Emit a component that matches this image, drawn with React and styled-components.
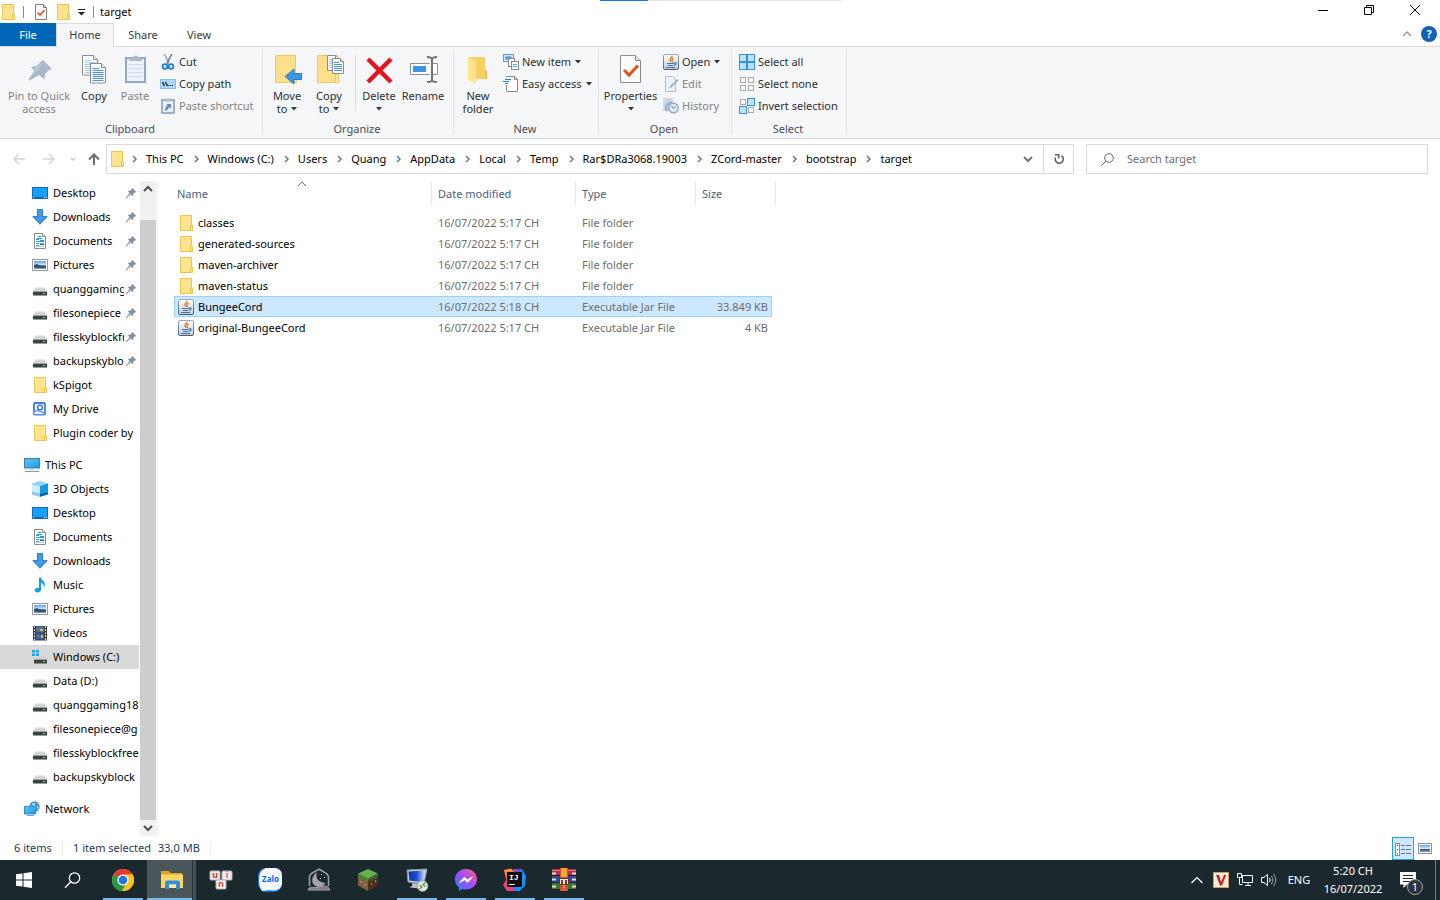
import React from "react";
import styled, { createGlobalStyle, css } from "styled-components";

const GlobalStyle = createGlobalStyle`
  *, *::before, *::after { box-sizing: border-box; }
  body {
    margin: 0;
    background: #fff;
    color: #000;
    font-family: "Noto Sans", "Open Sans", sans-serif;
    font-size: 11px;
    line-height: 14px;
  }
  button, input {
    font: inherit;
    color: inherit;
  }
  button {
    border: 0;
    padding: 0;
    background: transparent;
    text-align: left;
  }
  svg { display: block; flex: none; }
`;

/* ---------- shared gradients ---------- */

const HiddenSvg = styled.svg`
  position: absolute;
`;

const Defs = () => (
  <HiddenSvg width="0" height="0" aria-hidden="true">
    <defs>
      <linearGradient id="javaPlate" x1="0" y1="0" x2="0" y2="1">
        <stop offset="0" stopColor="#fdfdfe" />
        <stop offset="1" stopColor="#c3ccd6" />
      </linearGradient>
      <linearGradient id="javaEdge" x1="0" y1="0" x2="0" y2="1">
        <stop offset="0" stopColor="#9aabbc" />
        <stop offset="1" stopColor="#3f5f80" />
      </linearGradient>
      <linearGradient id="screen" x1="0" y1="0" x2="1" y2="1">
        <stop offset="0" stopColor="#5fc4f5" />
        <stop offset="1" stopColor="#1d9be6" />
      </linearGradient>
      <linearGradient id="photo" x1="0" y1="0" x2="0" y2="1">
        <stop offset="0" stopColor="#4f9ff0" />
        <stop offset="0.5" stopColor="#d8ebfa" />
        <stop offset="0.6" stopColor="#35506d" />
        <stop offset="1" stopColor="#7ba2c6" />
      </linearGradient>
      <linearGradient id="messenger" x1="0" y1="1" x2="1" y2="0">
        <stop offset="0" stopColor="#1a8cff" />
        <stop offset="0.5" stopColor="#a14bfa" />
        <stop offset="1" stopColor="#ff6480" />
      </linearGradient>
      <linearGradient id="ideaLeft" x1="0" y1="0" x2="0" y2="1">
        <stop offset="0" stopColor="#ffa229" />
        <stop offset="0.5" stopColor="#f8405f" />
        <stop offset="1" stopColor="#e8408c" />
      </linearGradient>
      <linearGradient id="blueCrt" x1="0" y1="0" x2="1" y2="0">
        <stop offset="0" stopColor="#0a2ea8" />
        <stop offset="0.5" stopColor="#1c51d8" />
        <stop offset="1" stopColor="#c6dcfb" />
      </linearGradient>
    </defs>
  </HiddenSvg>
);

/* ---------- icons: 16px ---------- */

const Svg16 = ({ children, ...rest }) => (
  <svg width="16" height="16" viewBox="0 0 16 16" aria-hidden="true" {...rest}>
    {children}
  </svg>
);

const FolderIcon = () => (
  <Svg16>
    <path d="M2.500.5h11v10.200h1v4.800h-12z" fill="#ffe48f" stroke="#eec44c" />
    <path d="M12.500 15.500v-4.800h2v4.800z" fill="#ffe9a4" stroke="#eec44c" />
  </Svg16>
);

const JavaIcon = () => (
  <Svg16>
    <rect x=".5" y=".5" width="15" height="15" rx="1.500" fill="url(#javaPlate)" stroke="url(#javaEdge)" />
    <path d="M9 1.800c.6 1.800-2.800 2.700-2 4.200.3.700.9 1 .9 1.800M10.600 4.200c-1.700.6-2 1.500-1.300 2.300.4.500.2 1.100-.3 1.600" fill="none" stroke="#ec7a1c" strokeWidth="1.400" />
    <path d="M4 9.500h7M5 11.500h5M3 13.500h9" stroke="#4474a4" />
    <path d="M11 9c1.600-.8 2.600.2 1.800 1.200-.4.500-1.100.9-1.800 1.100" fill="none" stroke="#4474a4" strokeWidth="1.200" />
  </Svg16>
);

const DesktopIcon = () => (
  <Svg16>
    <rect x=".5" y="2.500" width="15" height="11" fill="#12a0fb" stroke="#0c6fc0" />
    <path d="M1 12.500h14" stroke="#0a66b5" />
    <path d="M1 12.500h1M12 12.500h1M14 12.500h1" stroke="#fff" />
    <path d="M11 5h1v1h-1zM13 8h1v1h-1z" fill="#4fc1ff" />
  </Svg16>
);

const DownloadIcon = () => (
  <Svg16>
    <path d="M5.500.5h5v7h4.600L8 15.300.9 7.500h4.600z" fill="#3d9be8" stroke="#2b7dc4" />
  </Svg16>
);

const DocumentIcon = () => (
  <Svg16>
    <path d="M2.500.5h8l3 3v12h-11z" fill="#fff" stroke="#8a8a8a" />
    <path d="M10.500.5v3h3" fill="#e8e8e8" stroke="#8a8a8a" />
    <path d="M6 3.500h3M5 5.500h5M4 6.500h3M8 7.500h4M4 8.500h8" stroke="#1d9ae8" />
    <path d="M4 10.500h3M4 12.500h3" stroke="#3fa4e2" />
    <path d="M8 10.500h4" stroke="#8ab0cc" />
    <path d="M8 11.500h4" stroke="#3c5877" />
    <path d="M4 13.500h8" stroke="#b9d6ea" />
  </Svg16>
);

const PictureIcon = () => (
  <Svg16>
    <rect x=".5" y="2.500" width="15" height="11" fill="#fff" stroke="#9a9a9a" />
    <rect x="2" y="4" width="12" height="8" fill="url(#photo)" />
    <path d="M2 8l3-1 3 1.500 6 .5v1.500l-7 .5-5-1z" fill="#2f5173" />
  </Svg16>
);

const DriveIcon = () => (
  <Svg16>
    <path d="M3.500 6.500h9L15 10H1z" fill="#d6d6d6" />
    <rect x="1" y="10" width="14" height="4.500" rx=".5" fill="#3b4145" />
    <path d="M1 10.500h14" stroke="#a0a3a5" />
    <path d="M11 12h2v1h-2z" fill="#6fdb5a" />
  </Svg16>
);

const WindowsDriveIcon = () => (
  <Svg16>
    <path d="M0 1h3v2.500H0zM4 1h3v2.500H4zM0 4.500h3V7H0zM4 4.500h3V7H4z" fill="#18a4f0" />
    <path d="M7 7.500h6l2 3H2l1.500-2H7z" fill="#d0d0d0" />
    <path d="M2 10h13v4.500H2z" fill="#3b4145" />
    <path d="M2 10.500h13" stroke="#a0a3a5" />
    <path d="M11 12h2v1h-2z" fill="#6fdb5a" />
  </Svg16>
);

const GoogleDriveIcon = () => (
  <Svg16>
    <rect x="2" y="2" width="11" height="11.500" rx="1" fill="#eaf2fe" stroke="#3f7fe8" strokeWidth="1.800" />
    <circle cx="8" cy="6.500" r="2.400" fill="#fff" stroke="#2468d8" strokeWidth="1.300" />
    <path d="M1.500 13.500c.3-3.500 3.300-4.600 6-3.200 1.600 1 3.700.2 5.500 3.200z" fill="#fff" stroke="#4d90f0" strokeWidth="1.200" />
  </Svg16>
);

const PcIcon = () => (
  <Svg16>
    <rect x=".5" y="1.500" width="15" height="9.500" fill="url(#screen)" stroke="#3f7fa8" />
    <path d="M6 11.500h4v1.500H6z" fill="#b8c4cc" />
    <path d="M1 14.500h14" stroke="#7d9db8" />
  </Svg16>
);

const CubeIcon = () => (
  <Svg16>
    <path d="M8 .5l8 2.300v10.400l-8 2.500-8-2.500V2.800z" fill="#1b9de2" />
    <path d="M8 .5l8 2.300-8 2.400-8-2.400z" fill="#8fd4f4" />
    <path d="M0 2.800l8 2.400v10.500l-8-2.500z" fill="#cfeafb" />
    <path d="M0 10.500l8 2v3.200l-8-2.500z" fill="#8cc8ec" />
    <path d="M8 12l8-1v2.200l-8 2.500z" fill="#0a5ea8" />
    <path d="M8 5.200l8-2.400v8.400l-8 1.800z" fill="#139ae2" />
  </Svg16>
);

const MusicIcon = () => (
  <Svg16>
    <path d="M7 .5h2c.3 2.600 3.900 3.600 3.900 7 0 1.300-.5 2.500-1.100 3 .4-2.700-.8-4-2.800-4.500v6.700c0 1.700-1.700 2.800-3.700 2.800C3.500 15.500 2.600 14.500 2.600 13.300c0-1.700 2-2.800 4.400-2.500z" fill="#119fee" />
  </Svg16>
);

const VideoIcon = () => (
  <Svg16>
    <rect x="1" y="1" width="14" height="14.500" fill="#3d3d3d" />
    <path d="M2.500 1.500v14M13.500 1.500v14" stroke="#fff" strokeDasharray="1.500 1.500" />
    <rect x="4" y="1.500" width="8" height="6" fill="#3e74b8" />
    <rect x="4" y="8.500" width="8" height="6" fill="#3463a8" />
    <path d="M5 3h3v2H5zM5 10h3v2H5z" fill="#c94a36" />
    <path d="M8 4h3v2H8zM9 10h2v3H9z" fill="#e0b845" />
  </Svg16>
);

const NetworkIcon = () => (
  <Svg16>
    <circle cx="10.500" cy="5.500" r="5.200" fill="#4b93cc" />
    <path d="M8 2.500c2-1.500 4 0 3 1.500s-3 .5-3-1.500zM12.500 5c2 0 2.500 1.500 1 3z" fill="#b9d9ec" />
    <rect x=".5" y="5.500" width="11" height="7.500" fill="url(#screen)" stroke="#3c8fc8" />
    <path d="M3 14.500h7" stroke="#5aa9dd" />
  </Svg16>
);

const PinIcon = () => (
  <svg width="12" height="12" viewBox="0 0 12 12" aria-hidden="true">
    <path d="M7.200.8L11.300 4.900 9.800 5.400 8.300 7 8.100 9.500 5.700 7.500 1 11.500.5 11 4.500 6.300 2.600 4 5 3.800 6.600 2.300z" fill="#8593a1" />
  </svg>
);

const CheckedPageIcon = () => (
  <Svg16>
    <path d="M2.500.5h8l3 3v12h-11z" fill="#fafafa" stroke="#7f7f7f" />
    <path d="M10.500.5v3h3" fill="#ddd" stroke="#7f7f7f" />
    <path d="M4.500 8.500L7 11l4.500-5" fill="none" stroke="#e8531f" strokeWidth="1.700" />
  </Svg16>
);

const CutIcon = () => (
  <Svg16>
    <path d="M3.500 0H5l4.800 9-1.500 1z" fill="#a2a8ae" />
    <path d="M12.500 0H11L6.200 9l1.500 1z" fill="#747b82" />
    <circle cx="5" cy="12.500" r="2.300" fill="none" stroke="#1d7fd0" strokeWidth="1.800" />
    <circle cx="11" cy="12.500" r="2.300" fill="none" stroke="#1d7fd0" strokeWidth="1.800" />
  </Svg16>
);

const CopyPathIcon = () => (
  <Svg16>
    <rect x=".5" y="3.500" width="15" height="9" fill="#a9d8fb" stroke="#7fc0ee" />
    <path d="M2.500 6l2 4M5.500 6l2 4" stroke="#111" strokeWidth="1.200" />
    <path d="M8 9h1v1H8zM10 9h1v1h-1zM12 9h1v1h-1z" fill="#111" />
  </Svg16>
);

const PasteShortcutIcon = () => (
  <Svg16>
    <rect x="2" y="2" width="12" height="13" fill="#e9eef8" stroke="#8b9fc4" strokeWidth="1.600" />
    <rect x="5" y=".5" width="6" height="3" fill="#b4bccb" />
    <path d="M5 12.500c0-2.500.8-4 2.500-5L6.300 6H11v4.700L9.500 9.300C8.300 10 7.500 11 7.200 12.500z" fill="#7088b5" />
  </Svg16>
);

const NewItemIcon = () => (
  <Svg16>
    <rect x=".5" y=".5" width="10" height="7" fill="#cfe6fa" stroke="#5c9ed4" />
    <rect x="2.500" y="2.500" width="6" height="3" fill="#4b8fd6" />
    <rect x="5.500" y="4.500" width="6" height="8" fill="#fff" stroke="#8a8a8a" />
    <rect x="8.500" y="7.500" width="7" height="8" fill="#fff" stroke="#8a8a8a" />
    <path d="M10 10.500h4M10 12.500h4" stroke="#5ba7e3" />
  </Svg16>
);

const EasyAccessIcon = () => (
  <Svg16>
    <path d="M3.500 1.500V.5h8l3 3v12h-11V9" fill="#fff" stroke="#8a8a8a" />
    <path d="M11.500.5v3h3" fill="none" stroke="#8a8a8a" />
    <path d="M2 3.500h6M0 5.500h6M2 7.500h3" stroke="#1f80d0" strokeWidth="1.200" />
  </Svg16>
);

const EditIcon = () => (
  <Svg16>
    <path d="M2.500.5h7l3 3v12h-10z" fill="#edf3fb" stroke="#a9bdd9" />
    <path d="M6 12.500l1-2.500 7.500-7 1 1.500-7 7z" fill="#9db2d0" />
  </Svg16>
);

const HistoryIcon = () => (
  <Svg16>
    <path d="M0 0h9l2 3v10H0z" fill="#ccdbea" />
    <path d="M4 13a5.500 5.500 0 0 1 5-8.500" fill="none" stroke="#a0b6cd" strokeWidth="2.500" />
    <circle cx="10.500" cy="10" r="4.800" fill="#dfe8f1" stroke="#93a9c0" strokeWidth="1.400" />
    <path d="M8.500 8l2 2.500 3-2.500" fill="none" stroke="#6d87a3" />
  </Svg16>
);

const Tile = ({ x, y, on }) => (
  <rect
    x={x + 0.5}
    y={y + 0.5}
    width={on ? 7 : 5}
    height={on ? 7 : 5}
    fill={on ? "#bfe0fb" : "#fff"}
    stroke={on ? "#2e93e3" : "#a8a8a8"}
  />
);

const SelectAllIcon = () => (
  <Svg16>
    <Tile x={0} y={0} on /><Tile x={8} y={0} on />
    <Tile x={0} y={8} on /><Tile x={8} y={8} on />
  </Svg16>
);

const SelectNoneIcon = () => (
  <Svg16>
    <Tile x={1} y={1} /><Tile x={9} y={1} />
    <Tile x={1} y={9} /><Tile x={9} y={9} />
  </Svg16>
);

const InvertIcon = () => (
  <Svg16>
    <Tile x={1} y={1} /><Tile x={8} y={0} on />
    <Tile x={0} y={8} on /><Tile x={9} y={9} />
  </Svg16>
);

/* ---------- icons: 32px ribbon ---------- */

const Svg32 = ({ children }) => (
  <svg width="32" height="32" viewBox="0 0 32 32" aria-hidden="true">
    {children}
  </svg>
);

const BigPinIcon = () => (
  <Svg32>
    <path d="M20 5l9 9-3 1-4 4-.5 5.500-5.500-4.500L6.500 25.500 5.500 24.500 11.500 16 8 12l5.500-1 4-4z" fill="#a9b7c8" />
    <path d="M20 7l-9 7 3 3z" fill="#bccadb" />
  </Svg32>
);

const Page = ({ x, y, tone = "#4c8fe0" }) => (
  <g transform={`translate(${x} ${y})`}>
    <path d="M.5.5h11l4 4v15.500H.5z" fill="#fff" stroke="#8c8c8c" />
    <path d="M11.500.5v4h4" fill="#eee" stroke="#8c8c8c" />
    <path d="M2.500 5.500h7M2.500 7.500h11M2.500 9.500h11M2.500 11.500h11M2.500 13.500h11M2.500 15.500h11M2.500 17.500h11" stroke={tone} />
  </g>
);

const SmallPage = ({ x, y, tone = "#4c8fe0" }) => (
  <g transform={`translate(${x} ${y})`}>
    <path d="M.5.5h8l3 3v12H.5z" fill="#fff" stroke="#8c8c8c" />
    <path d="M8.500.5v3h3" fill="#eee" stroke="#8c8c8c" />
    <path d="M2 4.500h5M2 6.500h8M2 8.500h8M2 10.500h8M2 12.500h8" stroke={tone} />
  </g>
);

const BigCopyIcon = () => (
  <Svg32>
    <Page x={4} y={0} tone="#9ccbf5" />
    <Page x={12} y={8} />
  </Svg32>
);

const BigPasteIcon = () => (
  <Svg32>
    <rect x="7" y="3" width="19" height="24" fill="#eef3fc" stroke="#90a6ce" strokeWidth="2" />
    <path d="M9 9.500h15M9 13.500h15M9 17.500h15M9 21.500h15" stroke="#cfdcf2" />
    <path d="M10 6V3h4a2.500 2.500 0 0 1 5 0h4v3z" fill="#b3bac6" />
  </Svg32>
);

const BigFolder = () => (
  <>
    <path d="M4.500.5h20v27h-20z" fill="#ffe08a" stroke="#eec75f" />
    <path d="M22.500 27.500V19.500h3v8z" fill="#ffe8a4" stroke="#eec75f" />
  </>
);

const MoveToIcon = () => (
  <Svg32>
    <BigFolder />
    <path d="M30.500 18.500v6H23v4.500l-9-7.500 9-7.500v4.500z" fill="#3d94df" stroke="#2e7fc5" />
  </Svg32>
);

const CopyToIcon = () => (
  <Svg32>
    <BigFolder />
    <SmallPage x={14} y={0} tone="#9ccbf5" />
    <SmallPage x={19} y={3} />
  </Svg32>
);

const DeleteIcon = () => (
  <Svg32>
    <path d="M5 4l23 23M28 4L5 27" stroke="#e0161e" strokeWidth="4.500" />
  </Svg32>
);

const RenameIcon = () => (
  <Svg32>
    <path d="M22.500 8.500h-19v11h19M26 8.500h4.500v11H26" fill="#fff" stroke="#8f8f8f" />
    <rect x="6" y="11" width="13" height="6" fill="#3797e6" />
    <path d="M25 3v23M20 2c2.500 0 5 0 5 2.500C25 2 27.500 2 30 2M20 27c2.500 0 5 0 5-2.500 0 2.500 2.500 2.500 5 2.500" fill="none" stroke="#737373" strokeWidth="2" />
  </Svg32>
);

const NewFolderIcon = () => (
  <Svg32>
    <path d="M6 2h17v14l2 1v7H13z" fill="#f8cf61" />
    <path d="M6 2l8 4v23l-8-4z" fill="#ffe390" />
    <path d="M23 15l2 1v8h-2z" fill="#e9bb4e" />
  </Svg32>
);

const PropertiesIcon = () => (
  <Svg32>
    <path d="M5.500.5h15l5 5v22h-20z" fill="#fcfcfc" stroke="#8c8c8c" />
    <path d="M20.500.5v5h5" fill="#e4e4e4" stroke="#8c8c8c" />
    <path d="M9 15l5 5 9-9.500" fill="none" stroke="#e8511d" strokeWidth="3" />
  </Svg32>
);

/* ---------- small glyphs ---------- */

const Caret = () => (
  <svg width="6" height="4" viewBox="0 0 6 4" aria-hidden="true">
    <path d="M0 0h6L3 3.500z" fill="#333" />
  </svg>
);

const Chevron = ({ d, size = 10, color = "#666", weight = 1.500 }) => (
  <svg width={size} height={size} viewBox="0 0 10 10" aria-hidden="true">
    <path d={d} fill="none" stroke={color} strokeWidth={weight} />
  </svg>
);
const UP = "M1 7l4-4 4 4";
const DOWN = "M1 3l4 4 4-4";
const RIGHT = "M3 2l3 3-3 3";

/* ---------- window frame ---------- */

const Screen = styled.div`
  display: flex;
  flex-direction: column;
  min-height: 100vh;
`;

const TitleBar = styled.header`
  position: relative;
  display: flex;
  align-items: center;
  height: 23px;
  padding-right: 2px;
`;

const QuickTools = styled.div`
  display: flex;
  align-items: center;
  gap: 6px;
  flex: 1;
`;

const Divider = styled.span`
  width: 1px;
  height: 12px;
  margin-left: 1px;
  margin-right: ${(p) => p.$after || 0}px;
  background: #8c8c8c;
`;

const WindowTitle = styled.h1`
  margin: 0;
  font-size: 11px;
  font-weight: 400;
`;

const LoadTrack = styled.div`
  position: absolute;
  top: 0;
  left: calc(50% - 120px);
  width: 241px;
  height: 1px;
  background: linear-gradient(to right, #1a73e8 48px, #e0e0e0 48px);
`;

const CaptionButton = styled.button`
  display: grid;
  place-items: center;
  align-self: stretch;
  width: 46px;
  padding-bottom: 3px;
`;

const TabBar = styled.nav`
  display: flex;
  align-items: stretch;
  height: 24px;
  border-bottom: 1px solid #dadbdc;
`;

const Tab = styled.button`
  width: ${(p) => p.$width}px;
  text-align: center;
  color: #3b3b3b;
  ${(p) => p.$kind === "file" && css`
    background: #0066b8;
    color: #fff;
  `}
  ${(p) => p.$kind === "active" && css`
    margin-bottom: -1px;
    padding-bottom: 2px;
    background: #f5f6f7;
    border: 1px solid #dadbdc;
    border-bottom: 0;
  `}
`;

const TabTools = styled.div`
  display: flex;
  align-items: center;
  gap: 9px;
  margin-left: auto;
  padding: 0 3px 2px 0;
`;

const HelpButton = styled.button`
  width: 16px;
  height: 16px;
  border-radius: 50%;
  background: #0f62b8;
  color: #fff;
  font-weight: 700;
  text-align: center;
`;

const Ribbon = styled.section`
  display: flex;
  height: 92px;
  padding: 2px 0 4px;
  background: #f5f6f7;
  border-bottom: 1px solid #dadbdc;
`;

const RibbonGroup = styled.div`
  display: flex;
  flex-direction: column;
  width: ${(p) => p.$width}px;
  border-right: 1px solid #e2e3e4;
`;

const GroupBody = styled.div`
  display: flex;
  flex: 1;
  padding: 2px 0 0 ${(p) => p.$inset || 0}px;
`;

const GroupLabel = styled.div`
  height: 14px;
  margin-bottom: -2px;
  padding-right: 2px;
  text-align: center;
  color: #4a4f55;
`;

const BigButton = styled.button`
  display: flex;
  flex-direction: column;
  align-items: center;
  width: ${(p) => p.$width}px;
  padding-top: 4px;
  line-height: 13px;
  text-align: center;
  white-space: nowrap;
  color: ${(p) => (p.disabled ? "#838383" : "#2b2f33")};

  svg + span { margin-top: 2px; }
`;

const BigLine = styled.span`
  display: flex;
  align-items: center;
  justify-content: center;
  gap: 4px;
  min-height: 13px;
`;

const SmallStack = styled.div`
  display: flex;
  flex-direction: column;
  padding-left: ${(p) => p.$inset || 0}px;
`;

const SmallButton = styled.button`
  display: flex;
  align-items: center;
  gap: 3px;
  height: 22px;
  white-space: nowrap;
  color: ${(p) => (p.disabled ? "#838383" : "#2b2f33")};

  span + svg { margin-left: 1px; }
`;

const InnerRule = styled.span`
  width: 1px;
  height: 56px;
  margin: 4px 2px 0 5px;
  background: #dcdddf;
`;

/* ---------- address row ---------- */

const AddressRow = styled.div`
  display: flex;
  align-items: stretch;
  height: 42px;
  padding: 5px 12px 7px 10px;
`;

const NavButtons = styled.div`
  display: flex;
  align-items: center;
  width: 96px;
  gap: 12px;
`;

const AddressBox = styled.div`
  display: flex;
  flex: 1;
  align-items: center;
  min-width: 0;
  border: 1px solid #d9d9d9;
  padding-left: 2px;
`;

const Crumbs = styled.ol`
  display: flex;
  flex: 1;
  gap: 8px;
  min-width: 0;
  margin: 0;
  padding: 0 0 0 5px;
  list-style: none;
  overflow: hidden;
`;

const Crumb = styled.li`
  display: flex;
  align-items: center;
  gap: 6px;
  white-space: nowrap;

  a {
    color: #000;
    text-decoration: none;
  }
`;

const BoxButton = styled.button`
  display: grid;
  place-items: center;
  align-self: stretch;
  width: 30px;
  border-left: ${(p) => (p.$ruled ? "1px solid #d9d9d9" : "0")};
`;

const SearchBox = styled.label`
  display: flex;
  align-items: center;
  gap: 13px;
  width: 342px;
  margin-left: 12px;
  padding-left: 14px;
  border: 1px solid #d9d9d9;

  input {
    flex: 1;
    min-width: 0;
    border: 0;
    padding: 0;
    outline: 0;
    background: transparent;
  }
  input::placeholder { color: #6d6d6d; opacity: 1; }
`;

/* ---------- body ---------- */

const Body = styled.div`
  display: flex;
  flex: 1;
  min-height: 0;
`;

const Sidebar = styled.nav`
  width: 140px;
  overflow: hidden;
`;

const TreeSection = styled.ul`
  margin: 0 0 8px;
  padding: 0;
  list-style: none;
`;

const TreeItem = styled.li`
  display: flex;
  align-items: center;
  gap: 5px;
  width: 139px;
  height: 24px;
  padding-left: ${(p) => (p.$root ? 24 : 32)}px;
  padding-right: ${(p) => (p.$pinned ? 2 : 0)}px;
  background: ${(p) => (p.$current ? "#d9d9d9" : "transparent")};
`;

const TreeLink = styled.a`
  flex: 1;
  min-width: 0;
  overflow: hidden;
  white-space: nowrap;
  color: #000;
  text-decoration: none;
  margin-right: ${(p) => (p.$pinned ? -4 : 0)}px;
`;

const Scrollbar = styled.div`
  display: flex;
  flex-direction: column;
  width: 16px;
  background: #f0f0f0;
`;

const ScrollButton = styled.button`
  display: grid;
  place-items: center;
  height: ${(p) => p.$height}px;
  padding-bottom: ${(p) => p.$height - 16}px;
`;

const ScrollThumb = styled.div`
  flex: 1;
  background: #cdcdcd;
`;

const Pane = styled.main`
  flex: 1;
  min-width: 0;
  margin-left: 1px;
  padding-left: 16px;
  border-left: 1px solid #f0f0f0;
`;

const FileTable = styled.table`
  table-layout: fixed;
  width: 602px;
  border-collapse: separate;
  border-spacing: 0;

  td, th {
    padding: 0 0 0 6px;
    font-weight: 400;
    text-align: left;
    white-space: nowrap;
  }
`;

const HeadCell = styled.th`
  height: 25px;
  border-right: 1px solid #e5e5e5;
  color: #4c607a;

  && { padding-left: ${(p) => (p.$first ? 3 : 6)}px; }
`;

const HeadInner = styled.div`
  display: grid;
  grid-template-columns: 1fr 10px 1fr;
  align-items: center;
  height: 25px;
  padding-right: 5px;

  svg { align-self: start; }
`;

const HeadGap = styled.tr`
  height: 6px;
`;

const FileRow = styled.tr`
  height: 21px;

  && td {
    color: #6d6d6d;
    ${(p) => p.$selected && css`
      background: #cce8ff;
      box-shadow: inset 0 1px #99d1ff, inset 0 -1px #99d1ff;
    `}
  }
  && td:first-child {
    padding-left: 4px;
    color: #000;
    ${(p) => p.$selected && css`
      box-shadow: inset 1px 1px #99d1ff, inset 0 -1px #99d1ff;
    `}
  }
  && td:nth-child(4) {
    padding-right: 4px;
    text-align: right;
    ${(p) => p.$selected && css`
      box-shadow: inset -1px 1px #99d1ff, inset 0 -1px #99d1ff;
    `}
  }
  && td:last-child:nth-child(5) {
    background: none;
    box-shadow: none;
  }
`;

const FileName = styled.span`
  display: flex;
  align-items: center;
  gap: 4px;
`;

const StatusBar = styled.footer`
  display: flex;
  align-items: center;
  height: 24px;
  padding: 0 4px 0 14px;
  color: #1e395b;
`;

const StatusText = styled.span`
  min-width: ${(p) => p.$min || 0}px;
`;

const StatusRule = styled.span`
  width: 1px;
  height: 14px;
  margin-right: 10px;
  background: #ececec;
`;

const ViewSwitch = styled.div`
  display: flex;
  align-self: stretch;
  margin-left: auto;
  padding-top: 1px;
`;

const ViewButton = styled.button`
  display: grid;
  place-items: center;
  width: 22px;
  border: 1px solid ${(p) => (p.$on ? "#26a0da" : "transparent")};
  background: ${(p) => (p.$on ? "#cce8ff" : "transparent")};
`;

/* ---------- taskbar ---------- */

const Taskbar = styled.footer`
  display: flex;
  height: 40px;
  background: #1b292e;
  color: #fff;
`;

const SystemButton = styled.button`
  display: grid;
  place-items: center;
  width: 48px;
`;

const AppButtons = styled.div`
  display: flex;
  margin-left: 2px;
`;

const underline = {
  idle: "0 0",
  open: "40px 2px",
  active: "49px 2px",
};

const AppButton = styled.button`
  display: grid;
  place-items: center;
  width: 49px;
  background: linear-gradient(#76b9ed, #76b9ed) no-repeat center bottom / ${(p) => underline[p.$state]};
  ${(p) => p.$state === "active" && css`
    background-color: #4a565a;
    box-shadow: inset -3px 0 #465256, inset -4px 0 #263338;
  `}
`;

const Tray = styled.div`
  display: flex;
  align-items: center;
  margin-left: auto;
`;

const TrayItem = styled.button`
  display: grid;
  place-items: center;
  align-self: stretch;
  width: ${(p) => p.$width || 24}px;
`;

const Clock = styled.time`
  width: 72px;
  line-height: 18px;
  text-align: center;
`;

const ClockLine = styled.span`
  display: block;
`;

const Notice = styled.button`
  position: relative;
  display: grid;
  place-items: center;
  align-self: stretch;
  width: 38px;
`;

const Badge = styled.span`
  position: absolute;
  right: 4px;
  bottom: 5px;
  width: 16px;
  height: 16px;
  border: 1px solid #a0a5a8;
  border-radius: 50%;
  background: #2c3437;
  text-align: center;
`;

const ShowDesktop = styled.button`
  align-self: stretch;
  width: 5px;
  margin-left: 8px;
  border-left: 1px solid #788084;
`;

const Svg24 = ({ children }) => (
  <svg width="24" height="24" viewBox="0 0 24 24" aria-hidden="true">
    {children}
  </svg>
);

const IconText = styled.text`
  font-family: ${(p) => (p.$mono ? '"Liberation Mono", monospace' : '"Open Sans", sans-serif')};
  font-weight: 700;
`;

const ChromeIcon = () => (
  <Svg24>
    <circle cx="12" cy="12" r="11" fill="#fbc116" />
    <path d="M12 12L2.500 6.500A11 11 0 0 1 21.500 6.500H12z" fill="#e33b2e" />
    <path d="M2.500 6.500A11 11 0 0 0 11 23l5-8.500-4-2.500z" fill="#229a48" />
    <path d="M21.500 6.500A11 11 0 0 1 11 23l5-8.500V6.500z" fill="#fbc116" />
    <circle cx="12" cy="12" r="5.600" fill="#fff" />
    <circle cx="12" cy="12" r="4.300" fill="#1f73e8" />
  </Svg24>
);

const ExplorerIcon = () => (
  <Svg24>
    <path d="M1 3h8l1.500 2H22v5H1z" fill="#e8a31e" />
    <path d="M1 6.500h22V20H1z" fill="#ffd667" />
    <path d="M5 21v-7l1.500-1.500h12L20 14v7h-4v-4.500H9V21z" fill="#2f8fde" />
    <path d="M9 16.500h7V20H9z" fill="#ffe9a8" />
  </Svg24>
);

const UniKeyIcon = () => (
  <Svg24>
    <rect x="1" y="3" width="10" height="9" rx="1" fill="#ececec" stroke="#b5b5b5" />
    <rect x="13" y="3" width="10" height="9" rx="1" fill="#ececec" stroke="#b5b5b5" />
    <rect x="7" y="12" width="10" height="9" rx="1" fill="#f6f6f6" stroke="#b5b5b5" />
    <IconText x="6" y="10" fontSize="9" fill="#e03030" textAnchor="middle">u</IconText>
    <IconText x="18" y="10" fontSize="9" fill="#f05a8c" textAnchor="middle">i</IconText>
    <IconText x="12" y="19" fontSize="9" fill="#e04030" textAnchor="middle">n</IconText>
  </Svg24>
);

const ZaloIcon = () => (
  <Svg24>
    <rect x="0" y="0" width="24" height="24" rx="8" fill="#0f72f5" />
    <path d="M8 0h9a7 7 0 0 1 7 7v8c0 5-4 7.500-9 7.500-3 0-5-.5-7 0-1.500.5-3 .7-4 .3C1.500 19 1 16 1 12 1 7 2 2 8 0z" fill="#f7faff" />
    <IconText x="12.500" y="14" fontSize="8" fill="#0b62e6" textAnchor="middle">Zalo</IconText>
  </Svg24>
);

const MoonIcon = () => (
  <Svg24>
    <path d="M2.500 18V9.500C2.500 7 5 5 7 4l5-2.800L17 4c2 1 4.500 3 4.500 5.500V18" fill="none" stroke="#9a9da0" strokeWidth="1.600" />
    <path d="M10 4.500c-2 5 1 10 8.500 10.500C16 20 7 20 5.500 14.500 4.600 10.500 6.500 6.500 10 4.500z" fill="#a2a5a8" />
    <path d="M1 22c.5-3 4-3 6-2.500 3 .8 5-1.500 8-1 3-1.300 7 0 8 3.500z" fill="#7c8083" stroke="#a2a5a8" />
    <path d="M14 6h1v1h-1zM17 9h1v1h-1zM13 10h1v1h-1z" fill="#ccc" />
  </Svg24>
);

const GrassIcon = () => (
  <Svg24>
    <path d="M12 1l10 4.500-10 5.500L2 5.500z" fill="#69b04c" />
    <path d="M2 5.500l10 5.500v12L2 17.500z" fill="#806040" />
    <path d="M22 5.500L12 11v12l10-5.500z" fill="#4e321f" />
    <path d="M2 5.500l10 5.500v3l-2-2v2l-3-3v2L4 9.500v2L2 10z" fill="#4c7f36" />
    <path d="M22 5.500L12 11v3l3-3v2l3-3 1 1 3-3z" fill="#3c6a2a" />
    <path d="M4 13h2v2H4zM8 16h2v2H8zM15 15h1v2h-1zM19 12h1v2h-1z" fill="#a5825c" />
  </Svg24>
);

const RemoteIcon = () => (
  <Svg24>
    <path d="M2 2l20-1-3 15-16-2z" fill="#c9ced2" stroke="#8a9298" />
    <path d="M3.500 3.500L20 2.500 17.500 14 4.500 12.500z" fill="url(#blueCrt)" />
    <path d="M7 15l5 .5.500 3 4 2-12-1 3-2z" fill="#bfc5ca" />
    <circle cx="17.500" cy="18" r="5.300" fill="#e9ebe8" stroke="#a2a5a3" />
    <path d="M14.500 17l2.500 2-2.500 2M20.500 14.500L18 16.500l2.500 2" fill="none" stroke="#4a9b40" strokeWidth="1.300" />
  </Svg24>
);

const MessengerIcon = () => (
  <Svg24>
    <path d="M12 1C5.500 1 1 5.600 1 11.500c0 3.300 1.500 6 4 7.900V23l3.500-2c1.100.3 2.300.5 3.500.5 6.500 0 11-4.600 11-10.200S18.500 1 12 1z" fill="url(#messenger)" />
    <path d="M5.500 14.500l4.800-5.200 3 2.600 5-2.700-4.800 5.200-3-2.600z" fill="#fff" stroke="#fff" />
  </Svg24>
);

const IdeaIcon = () => (
  <Svg24>
    <path d="M1 2l7-1.500L14 6v17H4L0 17l3-5z" fill="url(#ideaLeft)" />
    <path d="M12 2l7-1 4 7-1 10-6 5.500-6-1.500z" fill="#168ef4" />
    <path d="M10 1h6l3 4h-9z" fill="#8f42d8" />
    <rect x="4" y="4" width="15" height="15" fill="#0b0b0b" />
    <IconText $mono x="6" y="12" fontSize="8" fill="#fff">IJ</IconText>
    <path d="M6 16.500h6" stroke="#fff" />
  </Svg24>
);

const WinRarIcon = () => (
  <Svg24>
    <rect x="0" y="1" width="24" height="7" fill="#b2304f" />
    <rect x="0" y="8" width="24" height="7" fill="#31499c" />
    <rect x="0" y="15" width="24" height="7" fill="#2f7a3a" />
    <path d="M0 5.500h4M20 5.500h4M0 11.500h4M20 11.500h4M0 18.500h4M20 18.500h4" stroke="#e9dcc2" strokeWidth="2" />
    <path d="M0 2.500h24" stroke="#e0708a" />
    <path d="M0 7.500h24M0 14.500h24M0 21.500h24" stroke="#2a1d22" />
    <rect x="8" y="0" width="8" height="23" fill="#c9502b" />
    <path d="M9 0h6v9H9z" fill="#f0a92c" />
    <rect x="7.500" y="10.500" width="9" height="6" fill="#e9e5da" stroke="#5a3a2b" />
    <path d="M10 12v4M14 12v4" stroke="#8b3527" strokeWidth="2" />
    <path d="M12 17v6" stroke="#f0c060" strokeWidth="2" strokeDasharray="1 1" />
  </Svg24>
);

/* ---------- data ---------- */

const quickAccess = [
  ["Desktop", DesktopIcon, true],
  ["Downloads", DownloadIcon, true],
  ["Documents", DocumentIcon, true],
  ["Pictures", PictureIcon, true],
  ["quanggaming", DriveIcon, true],
  ["filesonepiece", DriveIcon, true],
  ["filesskyblockfree", DriveIcon, true],
  ["backupskyblock", DriveIcon, true],
  ["kSpigot", FolderIcon],
  ["My Drive", GoogleDriveIcon],
  ["Plugin coder by", FolderIcon],
];

const thisPc = [
  ["3D Objects", CubeIcon],
  ["Desktop", DesktopIcon],
  ["Documents", DocumentIcon],
  ["Downloads", DownloadIcon],
  ["Music", MusicIcon],
  ["Pictures", PictureIcon],
  ["Videos", VideoIcon],
  ["Windows (C:)", WindowsDriveIcon],
  ["Data (D:)", DriveIcon],
  ["quanggaming18", DriveIcon],
  ["filesonepiece@g", DriveIcon],
  ["filesskyblockfree", DriveIcon],
  ["backupskyblock", DriveIcon],
];

const crumbs = [
  "This PC", "Windows (C:)", "Users", "Quang", "AppData", "Local", "Temp",
  "Rar$DRa3068.19003", "ZCord-master", "bootstrap", "target",
];

const files = [
  ["classes", "16/07/2022 5:17 CH", "File folder", ""],
  ["generated-sources", "16/07/2022 5:17 CH", "File folder", ""],
  ["maven-archiver", "16/07/2022 5:17 CH", "File folder", ""],
  ["maven-status", "16/07/2022 5:17 CH", "File folder", ""],
  ["BungeeCord", "16/07/2022 5:18 CH", "Executable Jar File", "33.849 KB"],
  ["original-BungeeCord", "16/07/2022 5:17 CH", "Executable Jar File", "4 KB"],
];

const apps = [
  ["Google Chrome", ChromeIcon, "open"],
  ["File Explorer", ExplorerIcon, "active"],
  ["UniKey", UniKeyIcon, "idle"],
  ["Zalo", ZaloIcon, "idle"],
  ["Lunar", MoonIcon, "idle"],
  ["Minecraft", GrassIcon, "idle"],
  ["Remote Desktop", RemoteIcon, "open"],
  ["Messenger", MessengerIcon, "open"],
  ["IntelliJ IDEA", IdeaIcon, "open"],
  ["WinRAR", WinRarIcon, "open"],
];

/* ---------- composed parts ---------- */

const Big = ({ icon: Icon, lines, caret, width, disabled }) => (
  <BigButton type="button" $width={width} disabled={disabled}>
    <Icon />
    {lines.map((line, i) => (
      <BigLine key={line || i}>
        {line}
        {caret && i === lines.length - 1 && <Caret />}
      </BigLine>
    ))}
  </BigButton>
);

const Small = ({ icon: Icon, label, caret, disabled }) => (
  <SmallButton type="button" disabled={disabled}>
    <Icon />
    <span>{label}</span>
    {caret && <Caret />}
  </SmallButton>
);

const TreeRow = ({ label, icon: Icon, pinned, root, current }) => (
  <TreeItem $root={root} $current={current} $pinned={pinned}>
    <Icon />
    <TreeLink href="#" $pinned={pinned}>{label}</TreeLink>
    {pinned && <PinIcon />}
  </TreeItem>
);

export default function App() {
  return (
    <Screen>
      <GlobalStyle />
      <Defs />

      <TitleBar>
        <LoadTrack />
        <QuickTools>
          <FolderIcon />
          <Divider $after={3} />
          <CheckedPageIcon />
          <FolderIcon />
          <svg width="9" height="8" viewBox="0 0 9 8" aria-hidden="true">
            <path d="M1 1.500h7" stroke="#222" />
            <path d="M1 4h7L4.500 7.500z" fill="#222" />
          </svg>
          <Divider />
          <WindowTitle>target</WindowTitle>
        </QuickTools>
        <CaptionButton type="button" aria-label="Minimize">
          <svg width="10" height="10" viewBox="0 0 10 10"><path d="M0 5.500h10" stroke="#000" /></svg>
        </CaptionButton>
        <CaptionButton type="button" aria-label="Restore">
          <svg width="10" height="10" viewBox="0 0 10 10">
            <path d="M.5 2.500h7v7h-7zM2.500 2.500v-2h7v7h-2" fill="none" stroke="#000" />
          </svg>
        </CaptionButton>
        <CaptionButton type="button" aria-label="Close">
          <svg width="10" height="10" viewBox="0 0 10 10"><path d="M0 0l10 10M10 0L0 10" stroke="#000" /></svg>
        </CaptionButton>
      </TitleBar>

      <TabBar>
        <Tab type="button" $kind="file" $width={56}>File</Tab>
        <Tab type="button" $kind="active" $width={58}>Home</Tab>
        <Tab type="button" $width={58}>Share</Tab>
        <Tab type="button" $width={54}>View</Tab>
        <TabTools>
          <Chevron d={UP} color="#9a9a9a" />
          <HelpButton type="button">?</HelpButton>
        </TabTools>
      </TabBar>

      <Ribbon>
        <RibbonGroup $width={263}>
          <GroupBody $inset={4}>
            <Big icon={BigPinIcon} lines={["Pin to Quick", "access"]} width={70} disabled />
            <Big icon={BigCopyIcon} lines={["Copy"]} width={40} />
            <Big icon={BigPasteIcon} lines={["Paste"]} width={42} disabled />
            <SmallStack $inset={4}>
              <Small icon={CutIcon} label="Cut" />
              <Small icon={CopyPathIcon} label="Copy path" />
              <Small icon={PasteShortcutIcon} label="Paste shortcut" disabled />
            </SmallStack>
          </GroupBody>
          <GroupLabel>Clipboard</GroupLabel>
        </RibbonGroup>

        <RibbonGroup $width={191}>
          <GroupBody $inset={3}>
            <Big icon={MoveToIcon} lines={["Move", "to"]} caret width={42} />
            <Big icon={CopyToIcon} lines={["Copy", "to"]} caret width={42} />
            <InnerRule />
            <Big icon={DeleteIcon} lines={["Delete", ""]} caret width={42} />
            <Big icon={RenameIcon} lines={["Rename"]} width={46} />
          </GroupBody>
          <GroupLabel>Organize</GroupLabel>
        </RibbonGroup>

        <RibbonGroup $width={145}>
          <GroupBody $inset={3}>
            <Big icon={NewFolderIcon} lines={["New", "folder"]} width={42} />
            <SmallStack $inset={4}>
              <Small icon={NewItemIcon} label="New item" caret />
              <Small icon={EasyAccessIcon} label="Easy access" caret />
            </SmallStack>
          </GroupBody>
          <GroupLabel>New</GroupLabel>
        </RibbonGroup>

        <RibbonGroup $width={133}>
          <GroupBody $inset={3}>
            <Big icon={PropertiesIcon} lines={["Properties", ""]} caret width={57} />
            <SmallStack $inset={4}>
              <Small icon={JavaIcon} label="Open" caret />
              <Small icon={EditIcon} label="Edit" disabled />
              <Small icon={HistoryIcon} label="History" disabled />
            </SmallStack>
          </GroupBody>
          <GroupLabel>Open</GroupLabel>
        </RibbonGroup>

        <RibbonGroup $width={115}>
          <GroupBody $inset={3}>
            <SmallStack $inset={4}>
              <Small icon={SelectAllIcon} label="Select all" />
              <Small icon={SelectNoneIcon} label="Select none" />
              <Small icon={InvertIcon} label="Invert selection" />
            </SmallStack>
          </GroupBody>
          <GroupLabel>Select</GroupLabel>
        </RibbonGroup>
      </Ribbon>

      <AddressRow>
        <NavButtons>
          <button type="button" aria-label="Back">
            <svg width="18" height="14" viewBox="0 0 18 14"><path d="M15 7H4M9 2L4 7l5 5" fill="none" stroke="#d4d4d4" strokeWidth="1.500" /></svg>
          </button>
          <button type="button" aria-label="Forward">
            <svg width="18" height="14" viewBox="0 0 18 14"><path d="M3 7h11M9 2l5 5-5 5" fill="none" stroke="#d4d4d4" strokeWidth="1.500" /></svg>
          </button>
          <Chevron d={DOWN} size={6} color="#c8c8c8" weight={2} />
          <button type="button" aria-label="Up">
            <svg width="12" height="14" viewBox="0 0 12 14"><path d="M6 13V3M1 7.500l5-5 5 5" fill="none" stroke="#6b6f73" strokeWidth="2" /></svg>
          </button>
        </NavButtons>
        <AddressBox>
          <FolderIcon />
          <Crumbs>
            {crumbs.map((name) => (
              <Crumb key={name}>
                <Chevron d={RIGHT} color="#777" />
                <a href="#">{name}</a>
              </Crumb>
            ))}
          </Crumbs>
          <BoxButton type="button" aria-label="Previous locations">
            <Chevron d={DOWN} color="#777" weight={2} />
          </BoxButton>
          <BoxButton type="button" $ruled aria-label="Refresh">
            <svg width="12" height="12" viewBox="0 0 12 12">
              <path d="M8.300 2.700A4 4 0 1 1 2.600 4.500" fill="none" stroke="#5f6468" strokeWidth="1.700" />
              <path d="M2 1.800h3.700v3.700" fill="none" stroke="#5f6468" strokeWidth="1.600" />
            </svg>
          </BoxButton>
        </AddressBox>
        <SearchBox>
          <svg width="13" height="13" viewBox="0 0 13 13" aria-hidden="true">
            <circle cx="8" cy="5" r="4.300" fill="none" stroke="#666" />
            <path d="M5 8L.5 12.500" stroke="#666" />
          </svg>
          <input type="search" placeholder="Search target" aria-label="Search target" />
        </SearchBox>
      </AddressRow>

      <Body>
        <Sidebar>
          <TreeSection>
            {quickAccess.map(([label, icon, pinned]) => (
              <TreeRow key={label} label={label} icon={icon} pinned={pinned} />
            ))}
          </TreeSection>
          <TreeSection>
            <TreeRow label="This PC" icon={PcIcon} root />
            {thisPc.map(([label, icon]) => (
              <TreeRow key={label} label={label} icon={icon} current={label === "Windows (C:)"} />
            ))}
          </TreeSection>
          <TreeSection>
            <TreeRow label="Network" icon={NetworkIcon} root />
          </TreeSection>
        </Sidebar>
        <Scrollbar>
          <ScrollButton type="button" $height={39} aria-label="Scroll up">
            <Chevron d={UP} color="#505050" weight={2} />
          </ScrollButton>
          <ScrollThumb />
          <ScrollButton type="button" $height={16} aria-label="Scroll down">
            <Chevron d={DOWN} color="#505050" weight={2} />
          </ScrollButton>
        </Scrollbar>
        <Pane>
          <FileTable>
            <colgroup>
              <col width="258" />
              <col width="144" />
              <col width="120" />
              <col width="76" />
              <col width="4" />
            </colgroup>
            <thead>
              <tr>
                <HeadCell scope="col" $first>
                  <HeadInner>
                    <span>Name</span>
                    <Chevron d="M1 5l4-4 4 4" color="#777" weight={1} />
                  </HeadInner>
                </HeadCell>
                <HeadCell scope="col">Date modified</HeadCell>
                <HeadCell scope="col">Type</HeadCell>
                <HeadCell scope="col" colSpan={2}>Size</HeadCell>
              </tr>
            </thead>
            <tbody>
              <HeadGap aria-hidden="true" />
              {files.map(([name, date, type, size]) => (
                <FileRow key={name} $selected={name === "BungeeCord"}>
                  <td>
                    <FileName>
                      {type === "File folder" ? <FolderIcon /> : <JavaIcon />}
                      {name}
                    </FileName>
                  </td>
                  <td>{date}</td>
                  <td>{type}</td>
                  <td>{size}</td>
                  <td />
                </FileRow>
              ))}
            </tbody>
          </FileTable>
        </Pane>
      </Body>

      <StatusBar>
        <StatusText $min={48}>6 items</StatusText>
        <StatusRule />
        <StatusText $min={85}>1 item selected</StatusText>
        <StatusText $min={52}>33,0 MB</StatusText>
        <StatusRule />
        <ViewSwitch>
          <ViewButton type="button" $on aria-label="Details view">
            <svg width="18" height="16" viewBox="0 0 18 16">
              <rect x="1.500" y="2.500" width="4" height="12" fill="#fff" stroke="#8a8a8a" />
              <path d="M3 4.500h1M3 8.500h1" stroke="#333" />
              <path d="M3 12.500h1" stroke="#e33" />
              <path d="M7 4.500h4M12 4.500h5M7 8.500h4M12 8.500h5M7 12.500h4M12 12.500h5" stroke="#6d7478" />
            </svg>
          </ViewButton>
          <ViewButton type="button" aria-label="Large icons view">
            <svg width="14" height="11" viewBox="0 0 14 11">
              <rect x=".5" y=".5" width="13" height="10" fill="#fff" stroke="#8f8f8f" />
              <rect x="2" y="2" width="10" height="7" fill="url(#photo)" />
            </svg>
          </ViewButton>
        </ViewSwitch>
      </StatusBar>

      <Taskbar>
        <SystemButton type="button" aria-label="Start">
          <svg width="16" height="16" viewBox="0 0 16 16">
            <path d="M0 2.300l6.500-.9v6.100H0zM7.500 1.200L16 0v7.500H7.500zM0 8.500h6.500v6.100L0 13.700zM7.500 8.500H16V16l-8.500-1.200z" fill="#fff" />
          </svg>
        </SystemButton>
        <SystemButton type="button" aria-label="Search">
          <svg width="17" height="17" viewBox="0 0 17 17">
            <circle cx="10.500" cy="6" r="5.200" fill="none" stroke="#fff" strokeWidth="1.300" />
            <path d="M6.800 9.800L1 15.800" stroke="#fff" strokeWidth="1.300" />
          </svg>
        </SystemButton>
        <AppButtons>
          {apps.map(([name, Icon, state]) => (
            <AppButton type="button" key={name} $state={state} aria-label={name}>
              <Icon />
            </AppButton>
          ))}
        </AppButtons>
        <Tray>
          <TrayItem type="button" aria-label="Show hidden icons">
            <svg width="12" height="8" viewBox="0 0 12 8"><path d="M.5 7L6 1.500 11.500 7" fill="none" stroke="#fff" strokeWidth="1.200" /></svg>
          </TrayItem>
          <TrayItem type="button" aria-label="Vietnamese input">
            <Svg16>
              <rect x=".5" y=".5" width="15" height="15" fill="#f5ecd8" stroke="#c8a06a" />
              <path d="M3 3h3l2.200 7L11 3h2.200L9 13.500H7z" fill="#c8202a" />
            </Svg16>
          </TrayItem>
          <TrayItem type="button" aria-label="Network">
            <Svg16>
              <path d="M5.500 3.500h10v7h-10zM8 13.500h6M11 10.500v3M.5 1.500h4v4h-4zM2.500 5.500v7h3" fill="none" stroke="#fff" />
            </Svg16>
          </TrayItem>
          <TrayItem type="button" aria-label="Volume">
            <Svg16>
              <path d="M.5 5.500H3l3.500-3v11l-3.500-3H.5z" fill="none" stroke="#fff" />
              <path d="M8.500 6q1.500 2 0 4" fill="none" stroke="#fff" />
              <path d="M10.500 4q3 4 0 8M12.500 2q4.500 6 0 12" fill="none" stroke="#a0a8ab" />
            </Svg16>
          </TrayItem>
          <TrayItem type="button" $width={36}>ENG</TrayItem>
          <Clock dateTime="2022-07-16T17:20">
            <ClockLine>5:20 CH</ClockLine>
            <ClockLine>16/07/2022</ClockLine>
          </Clock>
          <Notice type="button" aria-label="1 new notification">
            <svg width="16" height="16" viewBox="0 0 16 16">
              <path d="M0 0h16v12.500H7L3.500 16v-3.500H0z" fill="#fff" />
              <path d="M3 3.500h10M3 6.500h10M3 9.500h7" stroke="#1b292e" />
            </svg>
            <Badge>1</Badge>
          </Notice>
          <ShowDesktop type="button" aria-label="Show desktop" />
        </Tray>
      </Taskbar>
    </Screen>
  );
}
